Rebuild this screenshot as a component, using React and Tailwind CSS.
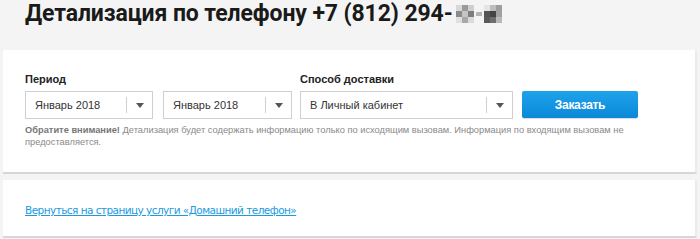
import React from 'react';

function Select({ value, className }) {
  return (
    <div className={`h-[28px] border border-[#cfcfcf] bg-white flex items-center ${className}`}>
      <span className="flex-1 pl-[9px] text-[11px] text-[#333] font-['Liberation_Sans',Arial,sans-serif] whitespace-nowrap">{value}</span>
      <span className="w-px h-[16px] bg-[#cfcfcf]" />
      <span className="w-[25px] flex justify-center">
        <svg width="8" height="5" viewBox="0 0 8 5"><path d="M0 0h8L4 5z" fill="#555" /></svg>
      </span>
    </div>
  );
}

export default function App() {
  return (
    <div className="w-[700px] h-[239px] bg-[#f4f4f4] overflow-hidden font-['Liberation_Sans',Arial,sans-serif]">
      <div className="h-[50px] pl-[25px] pt-[1px]">
        <h1 className="flex items-center text-[23px] leading-[26px] font-bold text-[#1a1a1a] font-['Roboto',sans-serif] tracking-[-0.1px] whitespace-nowrap">
          Детализация по телефону +7 (812) 294-
          <span className="ml-[3px] flex items-center gap-[2px]">
            <span className="grid grid-cols-3">
              <span className="w-[6px] h-[6px] bg-[#d8d8d8]" />
              <span className="w-[6px] h-[6px] bg-[#9a9a9a]" />
              <span className="w-[6px] h-[6px] bg-[#cfcfcf]" />
              <span className="w-[6px] h-[6px] bg-[#8a8a8a]" />
              <span className="w-[6px] h-[6px] bg-[#c4c4c4]" />
              <span className="w-[6px] h-[6px] bg-[#7d7d7d]" />
              <span className="w-[6px] h-[6px] bg-[#e0e0e0]" />
              <span className="w-[6px] h-[6px] bg-[#a8a8a8]" />
              <span className="w-[6px] h-[6px] bg-[#dadada]" />
            </span>
            <span className="w-[6px] h-[4px] bg-[#b5b5b5]" />
            <span className="grid grid-cols-3">
              <span className="w-[6px] h-[6px] bg-[#e4e4e4]" />
              <span className="w-[6px] h-[6px] bg-[#bdbdbd]" />
              <span className="w-[6px] h-[6px] bg-[#9d9d9d]" />
              <span className="w-[6px] h-[6px] bg-[#555]" />
              <span className="w-[6px] h-[6px] bg-[#444]" />
              <span className="w-[6px] h-[6px] bg-[#a0a0a0]" />
              <span className="w-[6px] h-[6px] bg-[#5a5a5a]" />
              <span className="w-[6px] h-[6px] bg-[#6d6d6d]" />
              <span className="w-[6px] h-[6px] bg-[#b8b8b8]" />
            </span>
          </span>
        </h1>
      </div>

      <div className="ml-[3px] mr-[3px] bg-white border-r-2 border-[#ebebeb] border-b-2 border-b-[#d6d6d6] h-[124px] pl-[22px] pt-[23px]">
        <div className="flex items-end gap-[8px]">
          <div>
            <div className="text-[11px] font-bold text-[#222] leading-[13px] mb-[5px]">Период</div>
            <div className="flex gap-[10px]">
              <Select value="Январь 2018" className="w-[128px]" />
              <Select value="Январь 2018" className="w-[129px]" />
            </div>
          </div>
          <div>
            <div className="text-[11px] font-bold text-[#222] leading-[13px] mb-[5px]">Способ доставки</div>
            <Select value="В Личный кабинет" className="w-[213px]" />
          </div>
          <button className="ml-[1px] w-[116px] h-[27px] mb-[1px] rounded-[2px] bg-gradient-to-b from-[#1ea3ea] to-[#0a88d8] text-white text-[12px] font-bold tracking-[-0.3px] shadow-[0_1px_1px_rgba(0,0,0,0.15)]">
            Заказать
          </button>
        </div>
        <p className="mt-[5px] w-[612px] text-[9.3px] leading-[12px] text-[#8a8a8a]">
          <b className="text-[#777]">Обратите внимание!</b> Детализация будет содержать информацию только по исходящим вызовам. Информация по входящим вызовам не предоставляется.
        </p>
      </div>

      <div className="mt-[6px] ml-[3px] mr-[3px] bg-white border-r-2 border-[#ebebeb] border-b-2 border-b-[#d6d6d6] h-[58px] pl-[22px] pt-[17px]">
        <a href="#" className="text-[10.5px] text-[#1a9ae0] underline font-['DejaVu_Sans',Verdana,sans-serif] tracking-[-0.55px]">
          Вернуться на страницу услуги «Домашний телефон»
        </a>
      </div>
    </div>
  );
}
